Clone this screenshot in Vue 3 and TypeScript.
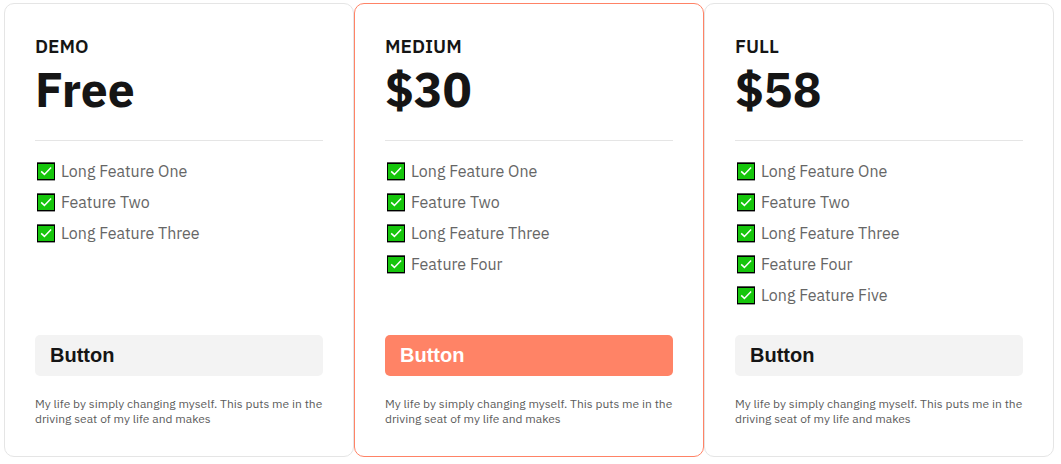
<script setup lang="ts">
interface Plan {
  id: string
  name: string
  price: string
  features: string[]
  active?: boolean
}

const plans: Plan[] = [
  { id: 'demo', name: 'DEMO', price: 'Free', features: ['Long Feature One', 'Feature Two', 'Long Feature Three'] },
  {
    id: 'medium',
    name: 'MEDIUM',
    price: '$30',
    features: ['Long Feature One', 'Feature Two', 'Long Feature Three', 'Feature Four'],
    active: true,
  },
  {
    id: 'full',
    name: 'FULL',
    price: '$58',
    features: ['Long Feature One', 'Feature Two', 'Long Feature Three', 'Feature Four', 'Long Feature Five'],
  },
]
</script>

<template>
  <main class="pricing">
    <section v-for="plan in plans" :key="plan.id" class="card" :class="[plan.id, { active: plan.active }]">
      <h2 class="name">{{ plan.name }}</h2>
      <div class="price">{{ plan.price }}</div>
      <ul class="features">
        <li v-for="feature in plan.features" :key="feature">
          <svg class="check" width="18" height="19" viewBox="0 0 18 19" aria-hidden="true">
            <rect width="18" height="18" fill="#555" />
            <rect y="18" width="18" height="1" fill="#999" />
            <rect y="1" width="18" height="17" fill="#000" />
            <rect x="1" y="2" width="16" height="15" fill="#16c60c" />
            <path d="M4.2 9.4 7.4 12.4 14.1 5.4" fill="none" stroke="#fff" stroke-width="1.5" />
          </svg>
          <span>{{ feature }}</span>
        </li>
      </ul>
      <button class="action" type="button">Button</button>
      <p class="note">
        My life by simply changing myself. This puts me in the<br />
        driving seat of my life and makes
      </p>
    </section>
  </main>
</template>

<style>
body {
  background: #fff;
}
</style>

<style scoped>
.pricing {
  display: flex;
  box-sizing: border-box;
  height: 464px;
  padding: 3px 7px 7px 4px;
  font-family: 'IBM Plex Sans', 'Noto Sans', sans-serif;
  color: #151515;
}
.card {
  display: flex;
  flex-direction: column;
  box-sizing: border-box;
  width: 350px;
  height: 454px;
  padding: 30px;
  border: 1px solid #e5e5e5;
  border-radius: 10px;
  white-space: nowrap;
}
.card.active {
  border-color: #ff8366;
}
.name {
  flex: none;
  margin: 0;
  font-size: 19px;
  font-weight: 600;
  line-height: 25px;
}
.price {
  flex: none;
  height: 81px;
  font-size: 48px;
  font-weight: 700;
  line-height: 60px;
  border-bottom: 1px solid #e5e5e5;
}
.features {
  flex: 1;
  margin: 0;
  padding: 15px 0 0;
  list-style: none;
}
.features li {
  display: flex;
  align-items: center;
  gap: 6px;
  height: 31px;
  padding-left: 2px;
  font-size: 16px;
  font-weight: 400;
  line-height: 31px;
  color: #666;
}
.check {
  flex: none;
}
.action {
  flex: none;
  height: 41px;
  padding: 0 15px 1px;
  border: 0;
  border-radius: 5px;
  background: #f3f3f3;
  color: #151515;
  font: 700 20px/40px 'Liberation Sans', Arial, sans-serif;
  text-align: left;
}
.active .action {
  background: #ff8366;
  color: #fff;
}
.note {
  flex: none;
  margin: 20px 0 0;
  font-size: 12px;
  line-height: 15px;
  color: #5c5c5c;
}
</style>
